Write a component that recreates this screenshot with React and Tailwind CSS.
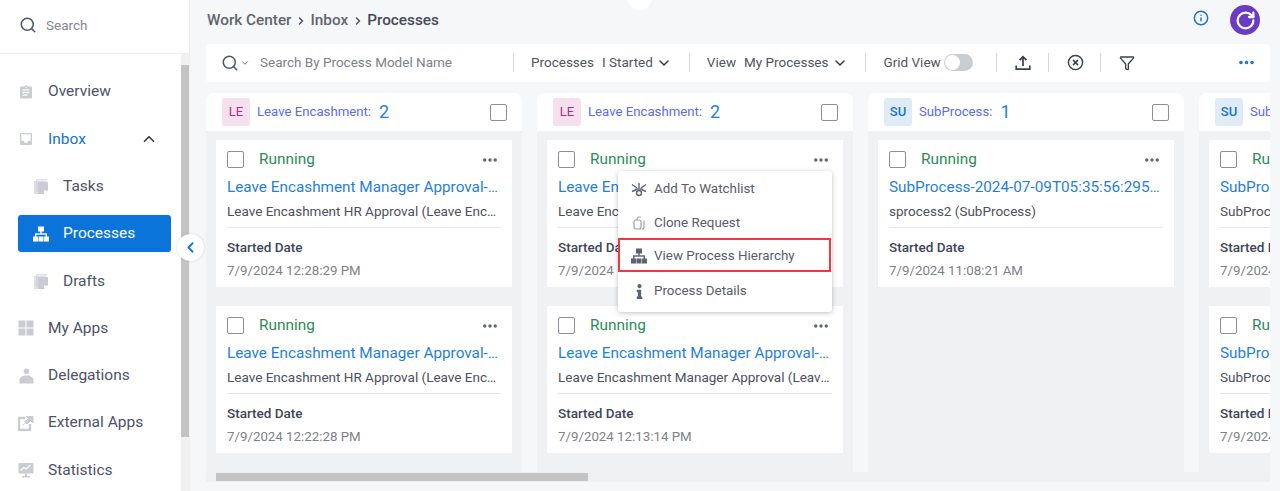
import React from "react";
import {
  Search,
  ChevronUp,
  ChevronDown,
  ChevronLeft,
  ChevronRight,
  Info,
  RotateCw,
  CircleX,
  Funnel,
  Ellipsis,
} from "lucide-react";
import { FaInfo } from "react-icons/fa";
import { MdAssignment, MdInbox } from "react-icons/md";

const HierarchyIcon = ({ color }) => (
  <svg width="16" height="16" viewBox="0 0 16 16" fill={color}>
    <rect x="5" y="0.500" width="6" height="5" />
    <rect x="7.300" y="5" width="1.400" height="3" />
    <rect x="2" y="7.300" width="12" height="1.400" />
    <rect x="2" y="8" width="1.400" height="3" />
    <rect x="12.600" y="8" width="1.400" height="3" />
    <rect x="0" y="10.500" width="5" height="5" />
    <rect x="5.500" y="10.500" width="5" height="5" />
    <rect x="11" y="10.500" width="5" height="5" />
  </svg>
);

const PagesIcon = () => (
  <svg width="16" height="17" viewBox="0 0 16 17" fill="#c9ccd2">
    <path d="M3 1h11v1.500H4.500V14H3z" opacity="0.6" />
    <path d="M1 3h12v9l-3.500 4H1z" opacity="0.6" />
    <path d="M5 4h10v8.500L11.500 16H5z" />
    <path d="M11 16v-3.500h4z" fill="#fff" />
  </svg>
);

const GridIcon = () => (
  <svg width="16" height="16" viewBox="0 0 16 16" fill="#c9ccd2">
    <rect x="0.500" y="0.500" width="7" height="7" />
    <rect x="8.500" y="0.500" width="7" height="7" />
    <rect x="0.500" y="8.500" width="7" height="7" />
    <rect x="8.500" y="8.500" width="7" height="7" />
  </svg>
);

const PersonIcon = () => (
  <svg width="15" height="16" viewBox="0 0 15 16" fill="#c9ccd2">
    <circle cx="7.500" cy="3.200" r="2.800" />
    <path d="M0.500 15.500v-3.500c0-2.500 3-4.500 7-4.500s7 2 7 4.500v3.500z" />
  </svg>
);

const ExternalIcon = () => (
  <svg width="16" height="16" viewBox="0 0 16 16" fill="none">
    <path d="M7 3H1v12h11V9" stroke="#c9ccd2" strokeWidth="2.400" />
    <path d="M4.500 10.500 10 5.500M8.500 1.500H15V8L12.500 5.500 9 9 6.500 6.500 11 3.800z" fill="#c9ccd2" stroke="#c9ccd2" strokeWidth="1" />
  </svg>
);

const StatsIcon = () => (
  <svg width="16" height="16" viewBox="0 0 16 16" fill="none">
    <rect x="0.500" y="1" width="15" height="10.500" rx="1" fill="#c9ccd2" />
    <path d="M2.500 8.500 6 5.500l2 1.500 4.500-4" stroke="#fff" strokeWidth="1.300" />
    <rect x="7" y="11.500" width="2" height="2.500" fill="#c9ccd2" />
    <rect x="4" y="14" width="8" height="1.500" fill="#c9ccd2" />
  </svg>
);

const UploadTray = () => (
  <svg width="16" height="16" viewBox="0 0 16 16" fill="none" stroke="#374151" strokeWidth="1.700">
    <path d="M8 11V2M4.500 5.200 8 1.800l3.500 3.400" />
    <path d="M1.200 10.500v3.700h13.600v-3.700" />
  </svg>
);

const WatchIcon = () => (
  <svg width="16" height="15" viewBox="0 0 16 15" fill="none" stroke="#5b6272" strokeWidth="1.400">
    <path d="M8 1v5M1 2.500 6 6M15 2.500 10 6M1 9.500 5.500 7.500M15 9.500l-4.500-2" />
    <circle cx="8" cy="11" r="2.500" />
    <path d="M4.500 7h7" />
  </svg>
);

const CloneIcon = () => (
  <svg width="13" height="14" viewBox="0 0 13 14" fill="none" stroke="#9ca1ac" strokeWidth="1.200">
    <rect x="1" y="4" width="7" height="9" rx="2" />
    <path d="M4 4V3a2 2 0 0 1 2-2h2M11 4.500V11a2 2 0 0 1-2 2" />
  </svg>
);

const navItems = [
  { label: "Overview", icon: <MdAssignment size={19} color="#c9ccd2" /> },
  { label: "Inbox", icon: <MdInbox size={20} color="#c9ccd2" />, open: true },
  { label: "Tasks", icon: <PagesIcon />, sub: true },
  { label: "Processes", icon: <HierarchyIcon color="#fff" />, sub: true, active: true },
  { label: "Drafts", icon: <PagesIcon />, sub: true },
  { label: "My Apps", icon: <GridIcon /> },
  { label: "Delegations", icon: <PersonIcon /> },
  { label: "External Apps", icon: <ExternalIcon /> },
  { label: "Statistics", icon: <StatsIcon /> },
];

const columns = [
  {
    badge: "LE",
    badgeClass: "bg-[#f5e1ee] text-[#b8287f] font-normal",
    title: "Leave Encashment:",
    count: 2,
    cards: [
      { name: "Leave Encashment Manager Approval-2024-07-09", sub: "Leave Encashment HR Approval (Leave Encashment)", date: "7/9/2024 12:28:29 PM" },
      { name: "Leave Encashment Manager Approval-2024-07-09", sub: "Leave Encashment HR Approval (Leave Encashment)", date: "7/9/2024 12:22:28 PM" },
    ],
  },
  {
    badge: "LE",
    badgeClass: "bg-[#f5e1ee] text-[#b8287f] font-normal",
    title: "Leave Encashment:",
    count: 2,
    cards: [
      { name: "Leave Encashment Manager Approval-2024-07-09", sub: "Leave Encashment Manager Approval (Leave Encashment)", date: "7/9/2024 12:18:29 PM" },
      { name: "Leave Encashment Manager Approval-2024-07-09", sub: "Leave Encashment Manager Approval (Leave Encashment)", date: "7/9/2024 12:13:14 PM" },
    ],
  },
  {
    badge: "SU",
    badgeClass: "bg-[#dfecf7] text-[#1a74c9] font-medium",
    title: "SubProcess:",
    count: 1,
    cards: [
      { name: "SubProcess-2024-07-09T05:35:56:295-0000", sub: "sprocess2 (SubProcess)", date: "7/9/2024 11:08:21 AM" },
    ],
  },
  {
    badge: "SU",
    badgeClass: "bg-[#dfecf7] text-[#1a74c9] font-medium",
    title: "SubProcess:",
    count: 2,
    cards: [
      { name: "SubProcess-2024-07-09T05:35:56:295-0000", sub: "SubProcess (SubProcess)", date: "7/9/2024 11:08:21 AM" },
      { name: "SubProcess-2024-07-09T05:35:56:295-0000", sub: "SubProcess (SubProcess)", date: "7/9/2024 11:08:21 AM" },
    ],
  },
];

const Checkbox = () => (
  <span className="block w-[17px] h-[17px] shrink-0 border border-[#8b8f98] rounded-[2px] bg-white" />
);

const Card = ({ card }) => (
  <div className="bg-white h-[147px] px-[11px] pt-[10px] shrink-0">
    <div className="flex items-center h-[18px]">
      <Checkbox />
      <span className="ml-[15px] mt-[2px] text-[15.400px] text-[#2e8b57]">Running</span>
      <Ellipsis size={18} className="ml-auto mr-[2px] mt-[1px] text-[#5b6272]" strokeWidth={2.500} />
    </div>
    <div className="mt-[9px] text-[15.300px] leading-[20px] text-[#1f7fe0] truncate">{card.name}</div>
    <div className="mt-[5px] text-[13.500px] leading-[18px] text-[#4b5160] truncate pb-[7px] border-b border-[#e6e7ea]">{card.sub}</div>
    <div className="mt-[10px] text-[13.500px] leading-[18px] font-medium text-[#40455a]">Started Date</div>
    <div className="mt-[6px] text-[13.300px] leading-[18px] text-[#7d818c]">{card.date}</div>
  </div>
);

const Column = ({ col }) => (
  <div className="w-[316px] shrink-0 flex flex-col">
    <div className="h-[38px] bg-white rounded-t-[8px] flex items-center pl-[16px] pr-[15px] shrink-0">
      <span className={`w-[28px] h-[28px] rounded-[3px] flex items-center justify-center text-[13px] ${col.badgeClass}`}>
        {col.badge}
      </span>
      <span className="ml-[7px] text-[13.200px] text-[#5a6cf0]">{col.title}</span>
      <span className="ml-[8px] text-[18px] leading-none text-[#1f7fe0]">{col.count}</span>
      <span className="ml-auto"><Checkbox /></span>
    </div>
    <div className="flex-1 bg-[#f0f1f3] px-[10px] pt-[9px] flex flex-col gap-[19px] overflow-hidden">
      {col.cards.map((c, i) => (
        <Card key={i} card={c} />
      ))}
    </div>
  </div>
);

const Divider = () => <span className="block w-px h-[19px] bg-[#d5d7db]" />;

const menuItems = [
  { label: "Add To Watchlist", icon: <WatchIcon /> },
  { label: "Clone Request", icon: <CloneIcon /> },
  { label: "View Process Hierarchy", icon: <HierarchyIcon color="#5b6272" />, boxed: true },
  { label: "Process Details", icon: <FaInfo size={15} color="#5b6272" /> },
];

const ContextMenu = () => (
  <div className="absolute left-[618px] top-[171px] w-[214px] h-[141px] bg-white rounded-[3px] shadow-[0_1px_5px_rgba(0,0,0,0.25)] pt-[1px] flex flex-col z-10">
    {menuItems.map((m) => (
      <div
        key={m.label}
        className={`h-[34px] flex items-center text-[13.400px] text-[#575c6c] ${m.boxed ? "border-2 border-[#f0383e] mr-[1px] -mt-[2px] mb-[2px] pt-[2px] pl-[11px]" : "pl-[13px]"}`}
      >
        <span className="w-[16px] flex justify-center">{m.icon}</span>
        <span className="ml-[7px] whitespace-nowrap">{m.label}</span>
      </div>
    ))}
  </div>
);

const Sidebar = () => (
  <aside className="w-[190px] shrink-0 h-full bg-white flex flex-col border-r border-[#eceef0]">
    <div className="h-[54px] shrink-0 flex items-center pb-[3px] pl-[19px] border-b border-[#eceef0]">
      <Search size={18} className="text-[#4f5668]" strokeWidth={2} />
      <span className="ml-[9px] text-[13.500px] text-[#83868f]">Search</span>
    </div>
    <div className="flex-1 flex min-h-0">
      <nav className="flex-1 pt-[19px] pl-[18px] pr-[10px] overflow-hidden">
        {navItems.map((item) => (
          <div
            key={item.label}
            className={`h-[37px] mb-[10.300px] pt-[1px] flex items-center text-[15.500px] rounded-[3px] ${
              item.active ? "bg-[#0a74da] text-white" : item.open ? "text-[#1572d6]" : "text-[#4c5268]"
            } ${item.sub ? "pl-[15px]" : ""}`}
          >
            <span className="w-[16px] mr-[14px] flex justify-center">{item.icon}</span>
            {item.label}
            {item.open && <ChevronUp size={18} className="ml-auto mr-[13px] text-[#333a47]" strokeWidth={2.200} />}
          </div>
        ))}
      </nav>
      <div className="w-[8px] bg-[#f1f1f1] flex flex-col shrink-0">
        <div className="h-[11px]" />
        <div className="h-[372px] bg-[#c4c4c4]" />
      </div>
    </div>
  </aside>
);

const Toolbar = () => (
  <div className="h-[38px] shrink-0 bg-white rounded-[4px] flex items-center pl-[15px] pb-[1px] text-[13.500px] text-[#4f5563]">
    <Search size={18} className="text-[#4f5668]" />
    <ChevronDown size={10} className="ml-[1px] text-[#4f5668]" />
    <span className="ml-[10px] w-[253px] text-[#7d818c]">Search By Process Model Name</span>
    <Divider />
    <span className="ml-[17px]">Processes</span>
    <span className="ml-[8px]">I Started</span>
    <ChevronDown size={16} className="ml-[3px] text-[#333a47]" strokeWidth={2.200} />
    <span className="ml-[17px]"><Divider /></span>
    <span className="ml-[17px]">View</span>
    <span className="ml-[8px]">My Processes</span>
    <ChevronDown size={16} className="ml-[3px] text-[#333a47]" strokeWidth={2.200} />
    <span className="ml-[17px]"><Divider /></span>
    <span className="ml-[18px]">Grid View</span>
    <span className="ml-[3px] relative w-[29px] h-[17px] rounded-full bg-[#c9ccd2]">
      <span className="absolute left-[1px] top-[1px] w-[15px] h-[15px] rounded-full bg-white" />
    </span>
    <span className="ml-[23px]"><Divider /></span>
    <span className="ml-[18px]"><UploadTray /></span>
    <span className="ml-[17px]"><Divider /></span>
    <CircleX size={17} className="ml-[18px] text-[#374151]" strokeWidth={2} />
    <span className="ml-[16px]"><Divider /></span>
    <Funnel size={16} className="ml-[18px] text-[#374151]" strokeWidth={2} />
    <Ellipsis size={19} className="ml-auto mr-[14px] text-[#1572d6]" strokeWidth={2.500} />
  </div>
);

export default function App() {
  return (
    <div className="relative w-[1280px] h-[491px] overflow-hidden flex bg-[#f6f7f9] font-['Roboto',sans-serif]">
      <Sidebar />
      <main className="flex-1 min-w-0 flex flex-col pl-[16px] pr-[10px] pb-[9px]">
        <div className="h-[44px] shrink-0 flex items-center pb-[3px] text-[15.300px] font-medium">
          <span className="text-[#5f6670] ml-[1px]">Work Center</span>
          <ChevronRight size={12} className="mx-[3.500px] text-[#4c5268]" strokeWidth={3} />
          <span className="text-[#5f6670]">Inbox</span>
          <ChevronRight size={12} className="mx-[3.500px] text-[#4c5268]" strokeWidth={3} />
          <span className="text-[#444a5a]">Processes</span>
          <Info size={16} className="ml-auto mr-[21px] mb-[6px] text-[#1572d6]" strokeWidth={2.200} />
          <span className="mr-[10px] mb-[1px] w-[30px] h-[30px] rounded-full bg-[#6a3cc4] flex items-center justify-center">
            <RotateCw size={21} className="text-white" strokeWidth={2.600} />
          </span>
        </div>
        <Toolbar />
        <div className="mt-[11px] flex-1 min-h-0 flex gap-[15px] overflow-hidden">
          {columns.map((c, i) => (
            <Column key={i} col={c} />
          ))}
        </div>
        <div className="h-[10px] shrink-0 bg-[#eff0f1] flex pl-[10px] items-center">
          <div className="w-[372px] h-[8px] bg-[#c4c4c4]" />
        </div>
      </main>
      {/* top handle, collapse button and the open card menu sit over the page */}
      <div className="absolute left-[627px] -top-[15px] w-[25px] h-[25px] rounded-full bg-white" />
      <button className="absolute left-[177px] top-[234px] w-[27px] h-[27px] rounded-full bg-white flex items-center justify-center shadow-[0_0_3px_rgba(0,0,0,0.15)]">
        <ChevronLeft size={17} className="text-[#1572d6]" strokeWidth={2.500} />
      </button>
      <ContextMenu />
    </div>
  );
}
